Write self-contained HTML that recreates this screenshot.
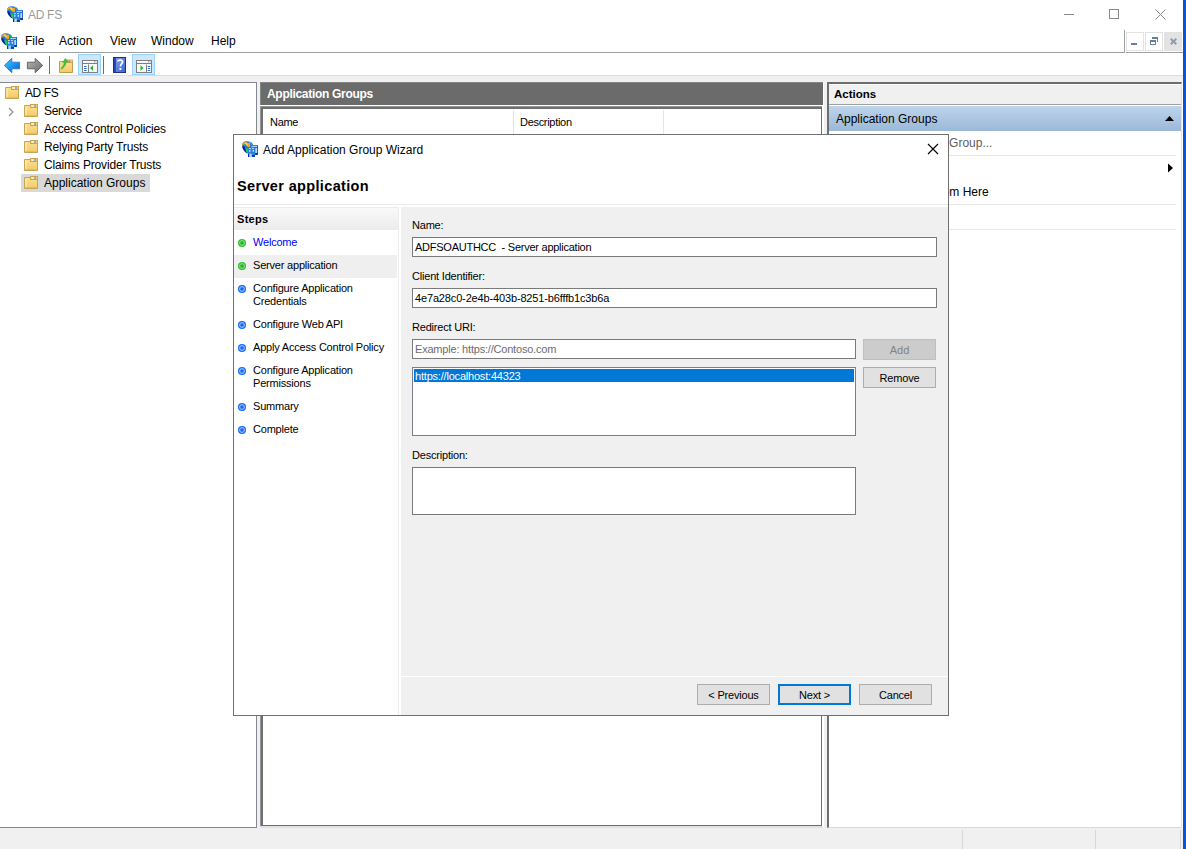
<!DOCTYPE html>
<html><head><meta charset="utf-8">
<style>
html,body{margin:0;padding:0;}
body{width:1186px;height:849px;overflow:hidden;background:#fff;position:relative;font-family:"Liberation Sans",sans-serif;color:#000;}
.a{position:absolute;}
.t{position:absolute;white-space:pre;line-height:1;font-size:12px;}
.w{font-size:11px;}
.b{font-weight:bold;}
.ln{position:absolute;}
</style></head>
<body>

<!-- ===== Title bar ===== -->
<svg width="0" height="0" style="position:absolute"><defs><symbol id="adfs" viewBox="0 0 16 16">
  <path d="M0 3.5 Q0.6 0.6 4.5 0.2 Q8.5 0 11 3 L11 12.5 L5.5 12.5 Q1 10 0 5.5 Z" fill="#2a70e0"/>
  <path d="M0.3 5.5 Q1.2 9.8 5.2 12.3 L5.5 10.5 L3.6 8.6 L2.2 5.2 Z" fill="#0a1c98"/>
  <path d="M3.4 7.2 L6.4 7.4 L8.2 9.6 L7.6 12.4 Q5.6 12.2 4.2 11 Z" fill="#16d23c"/>
  <path d="M2.2 2.8 L3.6 2.6 L3.6 4.6 L2.4 4.6 Z" fill="#16d23c"/>
  <path d="M9 3 L10.6 2.8 L10.6 4 L9.2 4 Z" fill="#30c848"/>
  <path d="M0.2 2.6 Q1.4 0.9 3.8 1 L6.2 1.9 L7.8 1.2 L8.2 4.5 L7.6 6.6 L6.5 7.2 L5.6 5.6 L4.6 5.2 L3.8 3.6 L2 2.8 L0.4 5.4 Z" fill="#f6a41a"/>
  <path d="M2.6 1.8 L4.4 1.6 L6.2 4 L5 4.2 Z" fill="#ffd27a"/>
  <path d="M5 0.3 Q8.2 0 10 1.8 L8.4 2.6 L7.6 1.2 Z" fill="#4aaef0"/>
  <rect x="9" y="4" width="7" height="10" fill="#1a68d0"/>
  <rect x="9.5" y="4.8" width="5.5" height="1" fill="#c8ecff"/>
  <rect x="13.3" y="7" width="1.7" height="5" fill="#b0dcff"/>
  <rect x="13.5" y="12" width="2.2" height="1.8" fill="#0a2fa8"/>
  <rect x="6" y="6" width="7" height="10" fill="#2a7edc"/>
  <rect x="7" y="7.2" width="1.8" height="0.9" fill="#d6f0ff"/>
  <rect x="10" y="7.2" width="1.9" height="0.9" fill="#d6f0ff"/>
  <rect x="7.2" y="9" width="1.2" height="1.8" fill="#d6f0ff"/>
  <rect x="10.7" y="9" width="1.2" height="1.8" fill="#d6f0ff"/>
  <rect x="7.4" y="12.6" width="2.4" height="3.3" fill="#a6d8ff"/>
  <rect x="10.2" y="14" width="2.6" height="1.8" fill="#0a2fa8"/>
  <rect x="6" y="13" width="1" height="3" fill="#0a2fa8"/>
</symbol>
<symbol id="fold" viewBox="0 0 14 13"><path d="M0.5 1.5 H6.2 L7 3.5 H13.5 V12.5 H0.5 Z" fill="url(#fg)" stroke="#c9a455" stroke-width="1"/><rect x="6.5" y="0.5" width="7" height="3" fill="#f6d57e" stroke="#c9a455" stroke-width="1"/><rect x="7.5" y="1.5" width="2.5" height="1" fill="#fff"/><rect x="10" y="1.5" width="2" height="1" fill="#3a86e8"/><rect x="1.5" y="2.5" width="1" height="9" fill="#fff0b8"/><rect x="1" y="11.6" width="12.5" height="0.9" fill="#c9a55a"/></symbol>
<linearGradient id="fg" x1="0" y1="0" x2="0" y2="1"><stop offset="0" stop-color="#fbe08e"/><stop offset="1" stop-color="#f2cb6a"/></linearGradient></defs></svg>
<svg class="a" style="left:7px;top:6px" width="16" height="16"><use href="#adfs"/></svg>
<div class="t" style="left:28px;top:9px;color:#9a9a9a;letter-spacing:-0.3px">AD FS</div>
<!-- window controls -->
<div class="ln" style="left:1064px;top:14px;width:10px;height:1px;background:#8a8a8a"></div>
<div class="ln" style="left:1109px;top:9px;width:8px;height:8px;border:1px solid #8a8a8a"></div>
<svg class="a" style="left:1155px;top:9px" width="11" height="11" viewBox="0 0 11 11"><path d="M0.5 0.5 L10.5 10.5 M10.5 0.5 L0.5 10.5" stroke="#8a8a8a" stroke-width="1"/></svg>
<!-- right blue border -->
<div class="ln" style="left:1183px;top:0;width:1px;height:849px;background:#2050a8"></div>
<div class="ln" style="left:1184px;top:0;width:2px;height:849px;background:#0a55d6"></div>

<!-- ===== Menu bar ===== -->
<svg class="a" style="left:1px;top:33px" width="16" height="16"><use href="#adfs"/></svg>
<div class="t" style="left:25px;top:35px">File</div>
<div class="t" style="left:59px;top:35px">Action</div>
<div class="t" style="left:110px;top:35px">View</div>
<div class="t" style="left:151px;top:35px">Window</div>
<div class="t" style="left:211px;top:35px">Help</div>
<div class="ln" style="left:0;top:52px;width:1125px;height:1px;background:#a0a0a0"></div>
<div class="ln" style="left:1124px;top:30px;width:1px;height:22px;background:#a0a0a0"></div>
<div class="ln" style="left:1126px;top:52px;width:57px;height:1px;background:#a0a0a0"></div>
<!-- MDI buttons -->
<div class="a" style="left:1126px;top:32px;width:16px;height:17px;border:1px solid #e3e3e3;background:#fff"></div>
<div class="ln" style="left:1131px;top:43px;width:6px;height:2px;background:#6a7f94"></div>
<div class="a" style="left:1145px;top:32px;width:16px;height:17px;border:1px solid #e3e3e3;background:#fff"></div>
<div class="ln" style="left:1152px;top:37px;width:6px;height:2px;background:#6a7f94"></div><div class="ln" style="left:1157px;top:37px;width:1px;height:5px;background:#6a7f94"></div>
<div class="ln" style="left:1150px;top:40px;width:4px;height:2px;border:1px solid #6a7f94;border-top-width:2px;background:#fff"></div>
<div class="a" style="left:1164px;top:32px;width:18px;height:19px;background:#e3e3e3"></div>
<svg class="a" style="left:1170px;top:38px" width="7" height="7" viewBox="0 0 8 8"><path d="M0.8 0.8 L7.2 7.2 M7.2 0.8 L0.8 7.2" stroke="#8c9db0" stroke-width="2.2"/></svg>

<!-- ===== Toolbar ===== -->
<svg class="a" style="left:0;top:53px" width="48" height="22" viewBox="0 53 48 22">
  <defs>
    <linearGradient id="bg1" x1="0" y1="0" x2="1" y2="1"><stop offset="0" stop-color="#5cc8ff"/><stop offset="0.5" stop-color="#1a9af0"/><stop offset="1" stop-color="#0058c0"/></linearGradient>
    <linearGradient id="gg1" x1="0" y1="0" x2="1" y2="1"><stop offset="0" stop-color="#b8b8b8"/><stop offset="0.5" stop-color="#909090"/><stop offset="1" stop-color="#6a6a6a"/></linearGradient>
  </defs>
  <path d="M4.3 65.5 L11.8 58.3 L11.8 62.2 L19.6 62.2 L19.6 68.8 L11.8 68.8 L11.8 72.7 Z" fill="url(#bg1)" stroke="#2a78c8" stroke-width="0.9" stroke-linejoin="round"/>
  <path d="M42.7 65.5 L35.2 58.3 L35.2 62.2 L27.4 62.2 L27.4 68.8 L35.2 68.8 L35.2 72.7 Z" fill="url(#gg1)" stroke="#5a5a5a" stroke-width="0.9" stroke-linejoin="round"/>
</svg>
<div class="ln" style="left:49px;top:56px;width:1px;height:18px;background:#6d6d6d"></div>
<svg class="a" style="left:59px;top:58px" width="14" height="15" viewBox="0 0 14 15">
  <path d="M0.5 3.5 H6 L6.8 4.5 H13.5 V14.5 H0.5 Z" fill="url(#fg)" stroke="#c39b4e"/>
  <rect x="7" y="2" width="6.5" height="2.5" fill="#f6d98e" stroke="#c39b4e" stroke-width="0.8"/>
  <rect x="9.5" y="2.6" width="2" height="1.2" fill="#4a90e0"/>
  <path d="M2 10.5 C3.5 9 5 7 5.5 4.2 L3.8 4.6 L6.2 0.6 L9.2 3.4 L7.3 3.8 C6.8 7 4.8 9.6 2.8 11 Z" fill="#3cc83c" stroke="#22a022" stroke-width="0.5"/>
</svg>
<div class="a" style="left:78px;top:54px;width:21px;height:19px;border:1px solid #99d1ff;background:#cce8ff"></div>
<svg class="a" style="left:82px;top:60px" width="16" height="13" viewBox="0 0 16 13">
  <rect x="0.5" y="0.5" width="15" height="12" fill="#f4f4f4" stroke="#7b7f86"/>
  <rect x="1" y="1" width="14" height="1" fill="#fff"/>
  <rect x="12" y="1.3" width="1" height="1" fill="#7b7f86"/><rect x="13.6" y="1.3" width="0.8" height="1" fill="#7b7f86"/>
  <rect x="1" y="3" width="14" height="1" fill="#7b7f86"/>
  <rect x="1" y="4" width="14" height="0.6" fill="#fff"/>
  <rect x="6" y="4.5" width="1" height="8" fill="#7b7f86"/>
  <rect x="1" y="4.6" width="5" height="7.4" fill="#fff"/>
  <rect x="2" y="6" width="2.6" height="1" fill="#2f6fc0"/><rect x="2" y="8" width="2.6" height="1" fill="#2f6fc0"/><rect x="2" y="10" width="2.6" height="1" fill="#2f6fc0"/>
  <rect x="7" y="4.6" width="8" height="7.4" fill="#f6f6f6"/>
  <path d="M8 8 L11 5.3 L11 10.7 Z" fill="#2ab42a"/>
</svg>
<div class="ln" style="left:103px;top:56px;width:1px;height:18px;background:#6d6d6d"></div>
<svg class="a" style="left:113px;top:57px" width="13" height="16" viewBox="0 0 13 16">
  <defs><linearGradient id="hg" x1="0" y1="0" x2="1" y2="1"><stop offset="0" stop-color="#7fa4ee"/><stop offset="1" stop-color="#3f64d0"/></linearGradient></defs>
  <rect x="0.5" y="0.5" width="12" height="15" fill="url(#hg)" stroke="#1c2f8c"/>
  <rect x="1" y="1" width="2" height="14" fill="#2a49b0"/>
  <path d="M5 4.6 C5 2.6 9.6 2.4 9.6 4.8 C9.6 6.6 7.4 6.8 7.4 9.4" fill="none" stroke="#fff" stroke-width="1.7"/>
  <rect x="6.5" y="11" width="1.9" height="1.9" fill="#fff"/>
</svg>
<div class="a" style="left:132px;top:54px;width:21px;height:19px;border:1px solid #99d1ff;background:#cce8ff"></div>
<svg class="a" style="left:136px;top:60px" width="16" height="13" viewBox="0 0 16 13">
  <rect x="0.5" y="0.5" width="15" height="12" fill="#f4f4f4" stroke="#7b7f86"/>
  <rect x="1" y="1" width="14" height="1" fill="#fff"/>
  <rect x="12" y="1.3" width="1" height="1" fill="#7b7f86"/><rect x="13.6" y="1.3" width="0.8" height="1" fill="#7b7f86"/>
  <rect x="1" y="3" width="14" height="1" fill="#7b7f86"/>
  <rect x="1" y="4" width="14" height="0.6" fill="#fff"/>
  <rect x="10" y="4.5" width="1" height="8" fill="#7b7f86"/>
  <rect x="11" y="4.6" width="4" height="7.4" fill="#fff"/>
  <rect x="11.8" y="6" width="2.4" height="1" fill="#2f6fc0"/><rect x="11.8" y="8" width="2.4" height="1" fill="#2f6fc0"/><rect x="11.8" y="10" width="2.4" height="1" fill="#2f6fc0"/>
  <rect x="1" y="4.6" width="9" height="7.4" fill="#f6f6f6"/>
  <path d="M4.5 5.3 L7.5 8 L4.5 10.7 Z" fill="#2ab42a"/>
</svg>
<div class="a" style="left:0;top:75px;width:1183px;height:7px;background:#f0f0f0"></div><div class="ln" style="left:0;top:75px;width:1183px;height:1px;background:#dcdcdc"></div>

<!-- ===== Panes ===== -->
<!-- tree pane -->
<div class="a" style="left:0;top:82px;width:256px;height:745px;border-top:1px solid #828790;border-right:1px solid #828790;border-bottom:1px solid #828790;background:#fff;box-sizing:border-box;width:257px;height:746px"></div>
<div class="a" style="left:257px;top:82px;width:3px;height:746px;background:#f0f0f0"></div>
<!-- middle pane -->
<div class="a" style="left:260px;top:82px;width:563px;height:23px;background:#6b6b6b;box-shadow:inset 1px 1px 0 #858585"></div>
<div class="t b" style="left:267px;top:88px;color:#fff;letter-spacing:-0.3px">Application Groups</div>
<div class="a" style="left:260px;top:105px;width:563px;height:1px;background:#fff"></div>
<div class="a" style="left:260px;top:106px;width:562px;height:720px;box-sizing:border-box;border-left:3px solid #6f6f6f;border-top:3px solid #6f6f6f;border-right:1px solid #6d6d6d;border-bottom:1px solid #6d6d6d;background:#fff"></div><div class="a" style="left:260px;top:826px;width:563px;height:2px;background:#e2e2e2"></div><div class="ln" style="left:260px;top:106px;width:1px;height:720px;background:#959595"></div><div class="ln" style="left:260px;top:106px;width:562px;height:1px;background:#959595"></div>
<div class="a" style="left:823px;top:82px;width:4px;height:746px;background:#f0f0f0"></div>
<div class="a" style="left:823px;top:82px;width:1px;height:746px;background:#fff"></div>
<div class="t w" style="left:270px;top:117px;letter-spacing:-0.3px">Name</div>
<div class="t w" style="left:520px;top:117px;letter-spacing:-0.3px">Description</div>
<div class="ln" style="left:513px;top:110px;width:1px;height:24px;background:#e5e5e5"></div>
<div class="ln" style="left:663px;top:110px;width:1px;height:24px;background:#e5e5e5"></div>

<!-- actions pane -->
<div class="a" style="left:827px;top:82px;width:355px;height:746px;box-sizing:border-box;border-top:2px solid #6d6d6d;border-left:2px solid #6d6d6d;border-right:1px solid #e3e3e3;border-bottom:1px solid #dadada;background:#fff"></div>
<div class="a" style="left:829px;top:85px;width:352px;height:19px;background:#f0f0f0"></div>
<div class="a" style="left:829px;top:104px;width:352px;height:1px;background:#a0a0a0"></div>
<div class="t b" style="left:834px;top:89px;font-size:11.5px">Actions</div>
<div class="a" style="left:829px;top:106px;width:352px;height:25px;background:linear-gradient(#bdd4eb,#9cb8d8)"></div>
<div class="t" style="left:836px;top:113px">Application Groups</div>
<svg class="a" style="left:1164px;top:115px" width="11" height="7" viewBox="0 0 11 7"><path d="M1 6 L5.5 1 L10 6 Z" fill="#000"/></svg>
<div class="t" style="left:863px;top:137px;color:#606060">Add Application Group...</div>
<div class="ln" style="left:836px;top:155px;width:340px;height:1px;background:#e6e6e6"></div>
<svg class="a" style="left:1167px;top:163px" width="7" height="10" viewBox="0 0 7 10"><path d="M1 0.5 L6 5 L1 9.5 Z" fill="#000"/></svg>
<div class="t" style="left:862px;top:186px">New Window from Here</div>
<div class="ln" style="left:836px;top:204px;width:340px;height:1px;background:#e6e6e6"></div>
<div class="ln" style="left:836px;top:229px;width:340px;height:1px;background:#e6e6e6"></div>

<!-- status bar -->
<div class="a" style="left:0;top:828px;width:1183px;height:21px;background:#f0f0f0"></div>
<div class="ln" style="left:962px;top:830px;width:1px;height:19px;background:#d7d7d7"></div>
<div class="ln" style="left:1095px;top:830px;width:1px;height:19px;background:#d7d7d7"></div>
<div class="ln" style="left:1180px;top:830px;width:1px;height:19px;background:#d7d7d7"></div>

<!-- TREE_CONTENT -->
<svg class="a" style="left:5px;top:86px" width="14" height="13"><use href="#fold"/></svg>
<div class="t" style="left:25px;top:87px;letter-spacing:-0.4px">AD FS</div>
<svg class="a" style="left:8px;top:107px" width="6" height="10" viewBox="0 0 6 10"><path d="M1 1 L5 5 L1 9" fill="none" stroke="#909090" stroke-width="1.2"/></svg>
<svg class="a" style="left:24px;top:104px" width="14" height="13"><use href="#fold"/></svg>
<div class="t" style="left:44px;top:105px;letter-spacing:-0.3px">Service</div>
<svg class="a" style="left:24px;top:122px" width="14" height="13"><use href="#fold"/></svg>
<div class="t" style="left:44px;top:123px;letter-spacing:-0.15px">Access Control Policies</div>
<svg class="a" style="left:24px;top:140px" width="14" height="13"><use href="#fold"/></svg>
<div class="t" style="left:44px;top:141px;letter-spacing:-0.17px">Relying Party Trusts</div>
<svg class="a" style="left:24px;top:158px" width="14" height="13"><use href="#fold"/></svg>
<div class="t" style="left:44px;top:159px;letter-spacing:-0.16px">Claims Provider Trusts</div>
<div class="a" style="left:21px;top:174px;width:129px;height:18px;background:#d9d9d9"></div>
<svg class="a" style="left:24px;top:176px" width="14" height="13"><use href="#fold"/></svg>
<div class="t" style="left:44px;top:177px">Application Groups</div>

<!-- DIALOG -->
<div class="a" style="left:233px;top:134px;width:716px;height:582px;box-sizing:border-box;border:1px solid #707070;background:#fff"></div>
<svg class="a" style="left:242px;top:141px" width="16" height="16"><use href="#adfs"/></svg>
<div class="t" style="left:263px;top:144px">Add Application Group Wizard</div>
<svg class="a" style="left:927px;top:143px" width="12" height="12" viewBox="0 0 12 12"><path d="M1 1 L11 11 M11 1 L1 11" stroke="#000" stroke-width="1.1"/></svg>
<div class="t b" style="left:237px;top:179px;font-size:14.5px;letter-spacing:0.35px">Server application</div>
<div class="ln" style="left:234px;top:204px;width:714px;height:1px;background:#ebebeb"></div>
<!-- steps panel -->
<div class="a" style="left:234px;top:207px;width:164px;height:23px;background:linear-gradient(#fafafa,#ebebeb)"></div><div class="ln" style="left:234px;top:207px;width:164px;height:1px;background:#ececec"></div>
<div class="ln" style="left:398px;top:207px;width:1px;height:508px;background:#ececec"></div>
<div class="t b w" style="left:237px;top:214px;letter-spacing:0.3px">Steps</div>
<div class="a" style="left:234px;top:255px;width:163px;height:23px;background:#efefef"></div>
<svg width="0" height="0" style="position:absolute"><defs>
<radialGradient id="gb" cx="0.5" cy="0.5" r="0.5"><stop offset="0" stop-color="#18a818"/><stop offset="0.35" stop-color="#3cbc3c"/><stop offset="0.6" stop-color="#8ad88a"/><stop offset="0.8" stop-color="#2cc82c"/><stop offset="1" stop-color="#22c022"/></radialGradient>
<radialGradient id="bb" cx="0.5" cy="0.5" r="0.5"><stop offset="0" stop-color="#0050f0"/><stop offset="0.35" stop-color="#3a7cf8"/><stop offset="0.6" stop-color="#98c0ff"/><stop offset="0.8" stop-color="#1070ff"/><stop offset="1" stop-color="#0a64ff"/></radialGradient>
<symbol id="dg" viewBox="0 0 8 8"><circle cx="4" cy="4" r="4" fill="url(#gb)"/></symbol>
<symbol id="db" viewBox="0 0 8 8"><circle cx="4" cy="4" r="4" fill="url(#bb)"/></symbol>
</defs></svg>
<svg class="a" style="left:238px;top:239px" width="8" height="8"><use href="#dg"/></svg>
<div class="t w" style="left:253px;top:237px;color:#0000ff;letter-spacing:-0.2px">Welcome</div>
<svg class="a" style="left:238px;top:262px" width="8" height="8"><use href="#dg"/></svg>
<div class="t w" style="left:253px;top:260px;letter-spacing:-0.2px">Server application</div>
<svg class="a" style="left:238px;top:285px" width="8" height="8"><use href="#db"/></svg>
<div class="t w" style="left:253px;top:283px;letter-spacing:-0.2px;line-height:13px;top:282px">Configure Application
Credentials</div>
<svg class="a" style="left:238px;top:321px" width="8" height="8"><use href="#db"/></svg>
<div class="t w" style="left:253px;top:319px;letter-spacing:-0.2px">Configure Web API</div>
<svg class="a" style="left:238px;top:344px" width="8" height="8"><use href="#db"/></svg>
<div class="t w" style="left:253px;top:342px;letter-spacing:-0.2px">Apply Access Control Policy</div>
<svg class="a" style="left:238px;top:367px" width="8" height="8"><use href="#db"/></svg>
<div class="t w" style="left:253px;top:364px;letter-spacing:-0.2px;line-height:13px">Configure Application
Permissions</div>
<svg class="a" style="left:238px;top:403px" width="8" height="8"><use href="#db"/></svg>
<div class="t w" style="left:253px;top:401px;letter-spacing:-0.2px">Summary</div>
<svg class="a" style="left:238px;top:426px" width="8" height="8"><use href="#db"/></svg>
<div class="t w" style="left:253px;top:424px;letter-spacing:-0.2px">Complete</div>
<!-- content panel -->
<div class="a" style="left:401px;top:207px;width:547px;height:508px;background:#f0f0f0"></div>
<div class="ln" style="left:401px;top:676px;width:547px;height:1px;background:#fff"></div>
<div class="t w" style="left:412px;top:220px;letter-spacing:-0.2px">Name:</div>
<div class="a" style="left:412px;top:237px;width:525px;height:20px;box-sizing:border-box;border:1px solid #7a7a7a;background:#fff"></div>
<div class="t w" style="left:415px;top:242px;letter-spacing:-0.25px">ADFSOAUTHCC  - Server application</div>
<div class="t w" style="left:412px;top:271px;letter-spacing:-0.2px">Client Identifier:</div>
<div class="a" style="left:412px;top:288px;width:525px;height:20px;box-sizing:border-box;border:1px solid #7a7a7a;background:#fff"></div>
<div class="t w" style="left:415px;top:293px;letter-spacing:-0.15px">4e7a28c0-2e4b-403b-8251-b6fffb1c3b6a</div>
<div class="t w" style="left:412px;top:322px;letter-spacing:-0.2px">Redirect URI:</div>
<div class="a" style="left:412px;top:339px;width:444px;height:20px;box-sizing:border-box;border:1px solid #7a7a7a;background:#fff"></div>
<div class="t w" style="left:415px;top:344px;letter-spacing:-0.2px;color:#6d6d6d">Example: https://Contoso.com</div>
<div class="a" style="left:863px;top:339px;width:73px;height:21px;box-sizing:border-box;border:1px solid #bfbfbf;background:#cccccc"></div>
<div class="t w" style="left:863px;top:345px;width:73px;text-align:center;color:#838383">Add</div>
<div class="a" style="left:412px;top:367px;width:444px;height:69px;box-sizing:border-box;border:1px solid #7a7f88;background:#fff"></div>
<div class="a" style="left:414px;top:369px;width:440px;height:13px;background:#0078d7"></div>
<div class="t w" style="left:415px;top:371px;letter-spacing:-0.2px;color:#fff">https://localhost:44323</div>
<div class="a" style="left:863px;top:367px;width:73px;height:21px;box-sizing:border-box;border:1px solid #adadad;background:#e1e1e1"></div>
<div class="t w" style="left:863px;top:373px;width:73px;text-align:center;letter-spacing:-0.2px">Remove</div>
<div class="t w" style="left:412px;top:450px;letter-spacing:-0.2px">Description:</div>
<div class="a" style="left:412px;top:467px;width:444px;height:48px;box-sizing:border-box;border:1px solid #7a7a7a;background:#fff"></div>
<!-- bottom buttons -->
<div class="a" style="left:697px;top:684px;width:73px;height:21px;box-sizing:border-box;border:1px solid #adadad;background:#e1e1e1"></div>
<div class="t w" style="left:697px;top:690px;width:73px;text-align:center;letter-spacing:-0.2px">&lt; Previous</div>
<div class="a" style="left:778px;top:684px;width:73px;height:21px;box-sizing:border-box;border:2px solid #0078d7;background:#e1e1e1"></div>
<div class="t w" style="left:778px;top:690px;width:73px;text-align:center;letter-spacing:-0.2px">Next &gt;</div>
<div class="a" style="left:859px;top:684px;width:73px;height:21px;box-sizing:border-box;border:1px solid #adadad;background:#e1e1e1"></div>
<div class="t w" style="left:859px;top:690px;width:73px;text-align:center;letter-spacing:-0.2px">Cancel</div>

</body></html>
